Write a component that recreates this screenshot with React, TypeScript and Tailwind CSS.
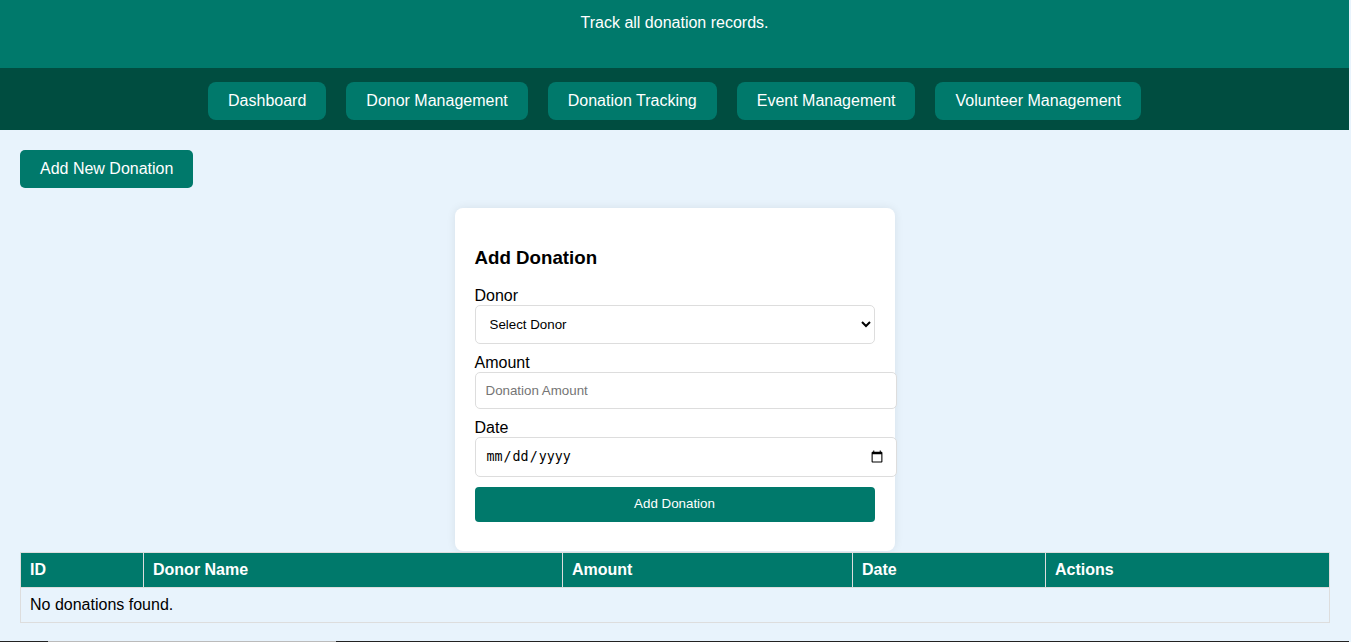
import React from "react";

const navItems = [
  "Dashboard",
  "Donor Management",
  "Donation Tracking",
  "Event Management",
  "Volunteer Management",
];

export default function App() {
  return (
    <div
      className="min-h-screen bg-[#e8f3fc] text-black"
      style={{ fontFamily: '"Liberation Sans", Arial, sans-serif' }}
    >
      <div className="w-[1349px]">
        <header className="h-[68px] bg-[#00796b] pt-[14px] text-center text-[16px] leading-[18px] text-white">
          <p>Track all donation records.</p>
        </header>
        <nav className="flex h-[62px] items-start justify-center gap-[20px] bg-[#004d40] pt-[14px]">
          {navItems.map((n) => (
            <button
              key={n}
              className="h-[38px] rounded-[8px] bg-[#00796b] px-[20px] text-[16px] leading-[18px] text-white"
            >
              {n}
            </button>
          ))}
        </nav>
        <main className="px-[20px] pt-[20px]">
          <button className="h-[38px] rounded-[5px] bg-[#00796b] px-[20px] text-[16px] text-white">
            Add New Donation
          </button>
          <div className="mx-auto mt-[20px] mb-[1px] w-[440px] rounded-[8px] bg-white p-[20px] shadow-[0_0_10px_rgba(0,0,0,0.08)]">
            <h3 className="mt-[18.72px] mb-[18.72px] text-[18.72px] font-bold leading-[21.5px]">
              Add Donation
            </h3>
            <label className="block text-[16px] leading-[18px]">Donor</label>
            <select className="mb-[10px] block h-[39px] w-[400px] rounded-[5px] border border-[#ddd] bg-white px-[10px] text-[13.333px] text-black">
              <option>Select Donor</option>
            </select>
            <label className="block text-[16px] leading-[18px]">Amount</label>
            <input
              type="number"
              placeholder="Donation Amount"
              className="mb-[10px] block h-[37px] w-[422px] rounded-[5px] border border-[#ddd] bg-white px-[10px] text-[13.333px] placeholder:text-[#757575]"
            />
            <label className="block text-[16px] leading-[18px]">Date</label>
            <input
              type="date"
              className="mb-[10px] block h-[40px] w-[422px] rounded-[5px] border border-[#ddd] bg-white px-[10px] text-[13.333px]"
              style={{ fontFamily: '"DejaVu Sans Mono", monospace' }}
            />
            <button className="mb-[9px] block h-[35px] w-[400px] rounded-[4px] bg-[#00796b] text-[13.333px] text-white">
              Add Donation
            </button>
          </div>
          <table className="w-[1309px] table-fixed border-collapse border border-[#ddd] text-[16px] leading-[18.4px]">
            <colgroup>
              <col className="w-[123px]" />
              <col className="w-[419px]" />
              <col className="w-[290px]" />
              <col className="w-[193px]" />
              <col className="w-[284px]" />
            </colgroup>
            <thead>
              <tr className="bg-[#00796b] text-white">
                {["ID", "Donor Name", "Amount", "Date", "Actions"].map((h) => (
                  <th
                    key={h}
                    className="border border-[#ddd] py-[8px] pr-[8px] pl-[9px] text-left font-bold"
                  >
                    {h}
                  </th>
                ))}
              </tr>
            </thead>
            <tbody>
              <tr>
                <td
                  colSpan={5}
                  className="border border-[#ddd] py-[8px] pr-[8px] pl-[9px] leading-[17.4px]"
                >
                  No donations found.
                </td>
              </tr>
            </tbody>
          </table>
        </main>
        <footer className="mt-[18px] h-[40px] bg-[#222]">
          <div className="ml-[48px] h-[1px] w-[288px] bg-[#bbb]" />
        </footer>
      </div>
    </div>
  );
}
